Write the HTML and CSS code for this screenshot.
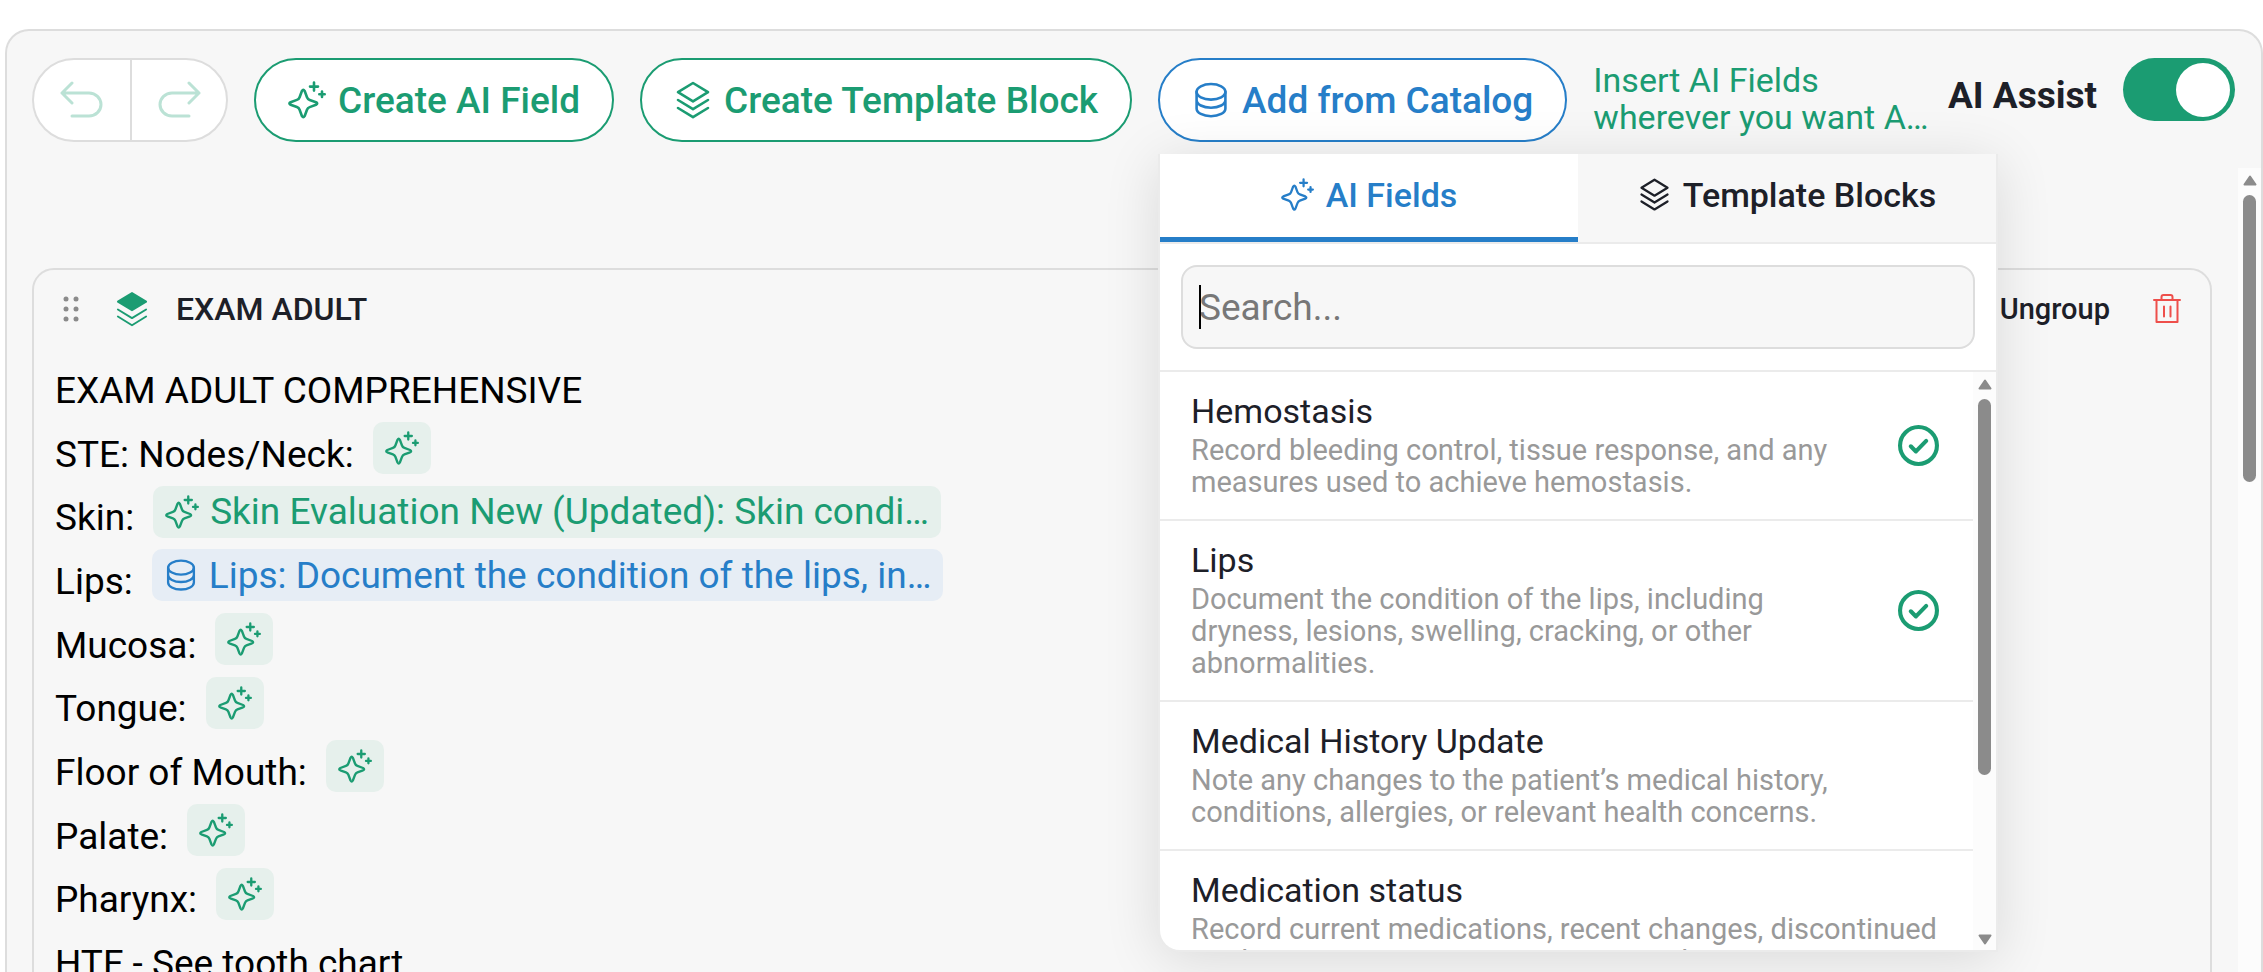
FILE: index.html
```html
<!DOCTYPE html>
<html lang="en">
<head>
<meta charset="utf-8">
<meta name="viewport" content="width=device-width, initial-scale=1">
<title>Template editor</title>
<link rel="stylesheet" href="styles.css">
</head>
<body>
<svg class="sprite" aria-hidden="true">
  <symbol id="sparkle" viewBox="0 0 38 38">
    <path d="M14 9.8Q15.3 7.6 16.6 9.8L19 16.2Q19.7 18.2 21.7 18.9L28 21.2Q30.4 22.5 28 23.8L21.7 26.1Q19.7 26.8 19 28.8L16.6 35.2Q15.3 37.4 14 35.2L11.6 28.8Q10.9 26.8 8.9 26.1L2.6 23.8Q.2 22.5 2.6 21.2L8.9 18.9Q10.9 18.2 11.6 16.2Z"/>
    <path d="M26 1.6v8M22 5.6h8M34 10.6v5.4M31.3 13.3h5.4"/>
  </symbol>
  <symbol id="layers" viewBox="0 0 34 38">
    <path d="M17 2L32 11.2L17 20.4L2 11.2ZM2 19L17 28.2L32 19M2 27L17 36.2L32 27"/>
  </symbol>
  <symbol id="database" viewBox="0 0 34 38">
    <ellipse cx="17" cy="10.8" rx="14.4" ry="7.8"/>
    <path d="M2.600 10.800V27.400C2.600 31.700 9 35.200 17 35.200S31.400 31.700 31.400 27.400V10.800M2.600 19C2.600 23.300 9 26.800 17 26.800S31.400 23.300 31.400 19"/>
  </symbol>
  <symbol id="check" viewBox="0 0 40 40">
    <circle cx="20" cy="20" r="18"/>
    <path d="M12.500 20.800L17.500 25.800L27.500 15.500"/>
  </symbol>
  <symbol id="arrow-up" viewBox="0 0 14 11">
    <path d="M7 1.500L12.500 9.500H1.500Z"/>
  </symbol>
</svg>

<main class="panel">
  <header class="toolbar">
    <div class="history">
      <button class="history-btn" type="button" aria-label="Undo" disabled>
        <svg class="icon-history" viewBox="0 0 44 38"><path d="M12 2L2 12L12 22M2 12H29A12 11.500 0 0 1 29 35H12"/></svg>
      </button>
      <button class="history-btn" type="button" aria-label="Redo" disabled>
        <svg class="icon-history" viewBox="0 0 44 38"><path d="M32 2L42 12L32 22M42 12H15A12 11.500 0 0 0 15 35H32"/></svg>
      </button>
    </div>
    <button class="pill" type="button"><svg class="icon"><use href="#sparkle"/></svg>Create AI Field</button>
    <button class="pill" type="button"><svg class="icon"><use href="#layers"/></svg>Create Template Block</button>
    <div class="catalog">
      <button class="pill pill-blue" type="button" aria-expanded="true"><svg class="icon"><use href="#database"/></svg>Add from Catalog</button>
      <section class="dropdown" aria-label="Catalog">
        <div class="tabs" role="tablist">
          <button class="tab tab-active" type="button" role="tab" aria-selected="true"><svg class="icon-tab"><use href="#sparkle"/></svg>AI Fields</button>
          <button class="tab" type="button" role="tab" aria-selected="false"><svg class="icon-tab"><use href="#layers"/></svg>Template Blocks</button>
        </div>
        <div class="search">
          <input class="search-input" type="text" placeholder="Search..." aria-label="Search">
          <span class="caret"></span>
        </div>
        <div class="list-wrap">
          <ul class="list">
            <li class="item">
              <div class="item-text"><h3 class="item-title">Hemostasis</h3><p class="item-desc">Record bleeding control, tissue response, and any measures used to achieve hemostasis.</p></div>
              <svg class="icon-check"><use href="#check"/></svg>
            </li>
            <li class="item">
              <div class="item-text"><h3 class="item-title">Lips</h3><p class="item-desc">Document the condition of the lips, including dryness, lesions, swelling, cracking, or other abnormalities.</p></div>
              <svg class="icon-check"><use href="#check"/></svg>
            </li>
            <li class="item">
              <div class="item-text"><h3 class="item-title">Medical History Update</h3><p class="item-desc">Note any changes to the patient’s medical history, conditions, allergies, or relevant health concerns.</p></div>
            </li>
            <li class="item">
              <div class="item-text"><h3 class="item-title">Medication status</h3><p class="item-desc">Record current medications, recent changes, discontinued medications, or previous concerns and use.</p></div>
            </li>
          </ul>
          <div class="scrollbar">
            <svg class="scroll-arrow"><use href="#arrow-up"/></svg>
            <div class="thumb thumb-list"></div>
            <svg class="scroll-arrow scroll-arrow-down"><use href="#arrow-up"/></svg>
          </div>
        </div>
      </section>
    </div>
    <p class="hint">Insert AI Fields wherever you want A…</p>
    <label class="assist">
      <span class="assist-label">AI Assist</span>
      <input class="switch" type="checkbox" role="switch" checked>
    </label>
  </header>

  <div class="workspace">
    <article class="card">
      <div class="card-head">
        <svg class="icon-grip" viewBox="0 0 16 26"><circle cx="3" cy="3" r="2.500"/><circle cx="13" cy="3" r="2.500"/><circle cx="3" cy="13" r="2.500"/><circle cx="13" cy="13" r="2.500"/><circle cx="3" cy="23" r="2.500"/><circle cx="13" cy="23" r="2.500"/></svg>
        <svg class="icon-block" viewBox="0 0 34 38"><path class="solid" d="M17 2L32 11.200L17 20.400L2 11.200Z"/><path d="M2 19.500L17 28.700L32 19.500M2 27L17 36.200L32 27"/></svg>
        <h2 class="card-title">EXAM ADULT</h2>
        <button class="ungroup" type="button">Ungroup</button>
        <button class="trash" type="button" aria-label="Delete">
          <svg class="icon-trash" viewBox="0 0 28 30"><path d="M1 6H27M3.500 6V28H24.500V6M8.500 6V3Q8.500 1 10.500 1H17.500Q19.500 1 19.500 3V6M11 12.500V22.500M17.500 12.500V22.500"/></svg>
        </button>
      </div>
      <div class="lines">
        <div class="line">EXAM ADULT COMPREHENSIVE</div>
        <div class="line">STE: Nodes/Neck: <button class="chip" type="button" aria-label="AI field"><svg class="icon-chip"><use href="#sparkle"/></svg></button></div>
        <div class="line">Skin: <button class="chip" type="button"><svg class="icon-chip"><use href="#sparkle"/></svg>Skin Evaluation New (Updated): Skin condi…</button></div>
        <div class="line">Lips: <button class="chip chip-blue" type="button"><svg class="icon-chip"><use href="#database"/></svg>Lips: Document the condition of the lips, in…</button></div>
        <div class="line">Mucosa: <button class="chip" type="button" aria-label="AI field"><svg class="icon-chip"><use href="#sparkle"/></svg></button></div>
        <div class="line">Tongue: <button class="chip" type="button" aria-label="AI field"><svg class="icon-chip"><use href="#sparkle"/></svg></button></div>
        <div class="line">Floor of Mouth: <button class="chip" type="button" aria-label="AI field"><svg class="icon-chip"><use href="#sparkle"/></svg></button></div>
        <div class="line">Palate: <button class="chip" type="button" aria-label="AI field"><svg class="icon-chip"><use href="#sparkle"/></svg></button></div>
        <div class="line">Pharynx: <button class="chip" type="button" aria-label="AI field"><svg class="icon-chip"><use href="#sparkle"/></svg></button></div>
        <div class="line">HTF - See tooth chart</div>
      </div>
    </article>
    <div class="scrollbar">
      <svg class="scroll-arrow"><use href="#arrow-up"/></svg>
      <div class="thumb thumb-page"></div>
    </div>
  </div>
</main>
</body>
</html>
```

FILE: styles.css
```css
:root {
  --green: #1b9c72;
  --blue: #267ec8;
  --ink: #1d2028;
  --line: #dddddd;
  --soft-line: #ebebeb;
  --surface: #f7f7f7;
}

* { box-sizing: border-box; }

body {
  margin: 0;
  height: 100vh;
  overflow: hidden;
  background: #ffffff;
  color: var(--ink);
  font-family: Roboto, "Liberation Sans", sans-serif;
}

button, input { font-family: inherit; }
button { margin: 0; padding: 0; border: 0; background: none; color: inherit; cursor: pointer; }
h2, h3, p, ul { margin: 0; padding: 0; }
ul { list-style: none; }

svg {
  display: block;
  flex: none;
  fill: none;
  stroke: currentColor;
  stroke-width: 2.6;
  stroke-linecap: round;
  stroke-linejoin: round;
}
.sprite { position: absolute; width: 0; height: 0; }

.panel {
  display: flex;
  flex-direction: column;
  height: calc(100vh - 29px);
  margin: 29px 0 0 5px;
  border: 2px solid var(--line);
  border-bottom: 0;
  border-radius: 24px 24px 0 0;
  background: var(--surface);
}

/* Toolbar */
.toolbar {
  display: flex;
  align-items: flex-start;
  gap: 26px;
  padding: 27px 26px 26px 25px;
}

.history {
  display: flex;
  flex: none;
  height: 84px;
  border: 2px solid var(--line);
  border-radius: 42px;
  background: #ffffff;
}
.history-btn {
  display: flex;
  align-items: center;
  justify-content: center;
  width: 96px;
  color: #bbe2d5;
}
.history-btn + .history-btn { border-left: 2px solid var(--line); }
.icon-history { width: 44px; height: 38px; stroke-width: 3; }

.pill {
  display: flex;
  align-items: center;
  flex: none;
  gap: 12px;
  height: 84px;
  padding: 0 32px;
  border: 2px solid var(--green);
  border-radius: 42px;
  background: #ffffff;
  color: var(--green);
  font-size: 37px;
  font-weight: 500;
  white-space: nowrap;
}
.pill-blue { border-color: var(--blue); color: var(--blue); }
.icon { width: 38px; height: 38px; }

.hint {
  flex: 1;
  min-width: 0;
  max-height: 84px;
  margin-right: -12px;
  padding-top: 4px;
  color: var(--green);
  font-size: 34px;
  line-height: 37px;
}

.assist { display: flex; flex: none; gap: 26px; }
.assist-label { padding-top: 17px; font-size: 37px; line-height: 42px; font-weight: 700; }
.switch {
  appearance: none;
  display: flex;
  align-items: center;
  justify-content: flex-end;
  width: 112px;
  height: 63px;
  margin: 0;
  padding: 0 5px;
  border-radius: 32px;
  background: var(--green);
}
.switch::before { content: ""; width: 54px; height: 54px; border-radius: 50%; background: #ffffff; }

/* Catalog dropdown */
.catalog { position: relative; flex: none; }
.dropdown {
  position: absolute;
  z-index: 2;
  top: 96px;
  left: 0;
  display: flex;
  flex-direction: column;
  width: 840px;
  height: 798px;
  border: 2px solid var(--soft-line);
  border-top: 0;
  border-radius: 0 0 0 22px;
  background: #ffffff;
  box-shadow: 0 8px 56px rgba(0, 0, 0, 0.12);
  overflow: hidden;
}
.tabs { display: flex; flex: none; height: 90px; border-bottom: 2px solid var(--soft-line); }
.tab {
  display: flex;
  flex: 1;
  align-items: center;
  justify-content: center;
  gap: 12px;
  padding-bottom: 2px;
  border-bottom: 5px solid transparent;
  background: var(--surface);
  font-size: 34px;
  font-weight: 500;
}
.tab-active { border-bottom-color: var(--blue); background: #ffffff; color: var(--blue); }
.icon-tab { width: 33px; height: 33px; }

.search { position: relative; flex: none; padding: 21px; border-bottom: 2px solid var(--soft-line); }
.search-input {
  display: block;
  width: 100%;
  height: 84px;
  padding: 0 16px;
  border: 2px solid var(--line);
  border-radius: 16px;
  outline: 0;
  background: var(--surface);
  color: var(--ink);
  font-size: 37px;
}
.search-input::placeholder { color: #777777; opacity: 1; }
.caret { position: absolute; top: 41px; left: 39px; width: 2px; height: 44px; background: #000000; }

.list-wrap { display: flex; flex: 1; min-height: 0; }
.list { flex: 1; min-width: 0; overflow: hidden; }
.item {
  display: flex;
  align-items: center;
  gap: 36px;
  padding: 20px 34px 21px 31px;
  border-bottom: 2px solid var(--soft-line);
}
.item-text { flex: 1; }
.item-title { margin-bottom: 4px; font-size: 34px; line-height: 38px; font-weight: 400; }
.item-desc { color: #999999; font-size: 29px; line-height: 32px; }
.icon-check { width: 41px; height: 41px; color: var(--green); stroke-width: 4; }

.scrollbar {
  display: flex;
  flex: none;
  flex-direction: column;
  align-items: center;
  gap: 9px;
  width: 23px;
  padding: 7px 0 5px;
  background: #fcfcfc;
}
.scroll-arrow { width: 14px; height: 11px; fill: #8b8b8b; stroke: #8b8b8b; stroke-width: 2; }
.scroll-arrow-down { margin-top: auto; transform: rotate(180deg); }
.thumb { width: 13px; border-radius: 7px; background: #8b8b8b; }
.thumb-list { height: 376px; }
.thumb-page { height: 287px; }

/* Workspace */
.workspace { display: flex; flex: 1; min-height: 0; overflow: hidden; }
.card {
  flex: 1;
  min-width: 0;
  height: 900px;
  margin: 100px 26px 0 25px;
  border: 2px solid var(--line);
  border-radius: 22px;
}
.card-head { display: flex; align-items: center; height: 78px; padding: 0 29px; }
.icon-grip { width: 16px; height: 26px; fill: #8b8b8b; stroke: none; }
.icon-block { width: 32px; height: 36px; margin: 0 28px 0 37px; color: var(--green); stroke-width: 2; }
.solid { fill: currentColor; }
.card-title { font-size: 32px; line-height: 38px; font-weight: 500; }
.ungroup { margin-left: auto; font-size: 29px; font-weight: 500; }
.trash { margin-left: 43px; color: #ee4f4b; }
.icon-trash { width: 28px; height: 30px; stroke-width: 2; }

.lines { padding: 10px 21px; color: #000000; font-size: 37px; }
.line { display: flex; align-items: center; gap: 19px; height: 64px; white-space: nowrap; }
.line:nth-child(3n) { height: 63px; }
.chip {
  display: flex;
  align-items: center;
  gap: 11px;
  height: 52px;
  margin-bottom: 12px;
  padding: 0 12px;
  border-radius: 10px;
  background: #e6f0ec;
  color: var(--green);
  font-size: 37px;
}
.chip-blue { background: #e6edf5; color: var(--blue); }
.icon-chip { width: 34px; height: 34px; }
```
